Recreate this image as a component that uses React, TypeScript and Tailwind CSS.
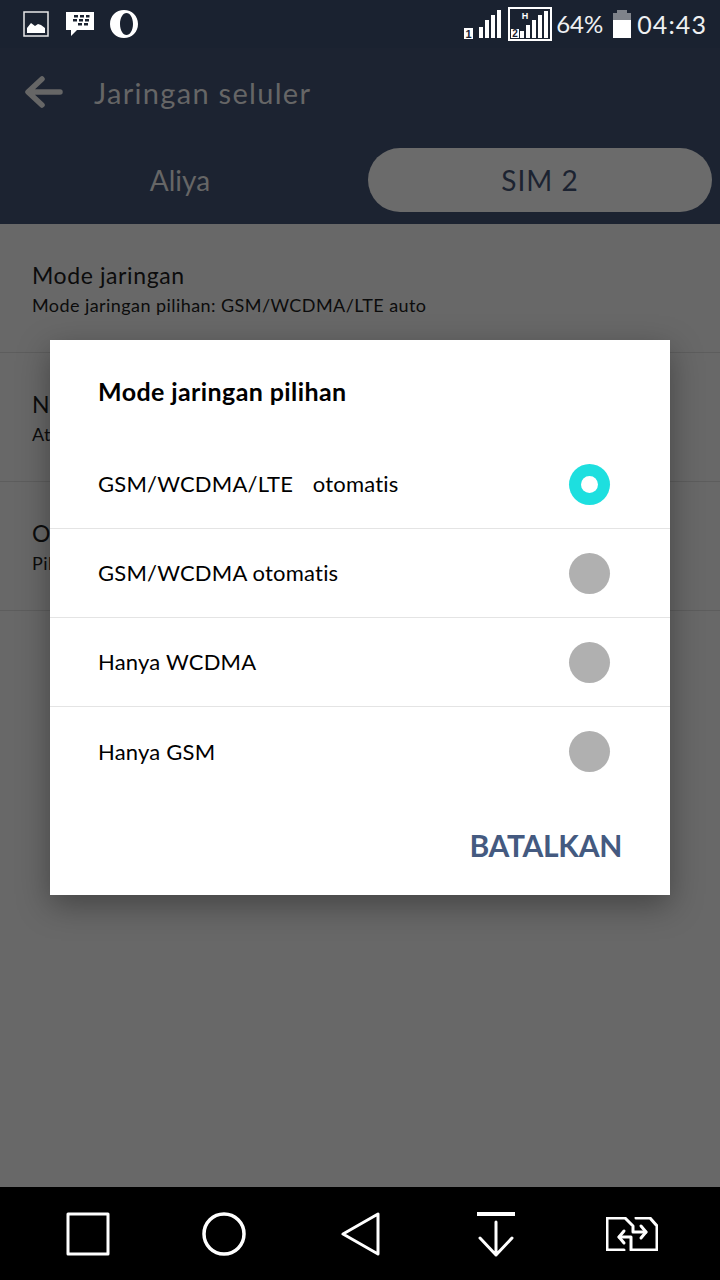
const font = "font-['Lato','Noto_Sans',sans-serif]";

const backgroundRows = [
  { title: 'Mode jaringan', sub: 'Mode jaringan pilihan: GSM/WCDMA/LTE auto' },
  { title: 'Nama titik akses', sub: 'Atur nama titik akses' },
  { title: 'Operator jaringan', sub: 'Pilih operator jaringan' },
];

const options = [
  { label: 'GSM/WCDMA/LTE  otomatis', selected: true },
  { label: 'GSM/WCDMA otomatis', selected: false },
  { label: 'Hanya WCDMA', selected: false },
  { label: 'Hanya GSM', selected: false },
];

function SimOneSignal() {
  return (
    <svg width="38" height="29" viewBox="0 0 38 29" fill="#fff">
      <rect x="0" y="18" width="9" height="11" />
      <text x="4.500" y="27.500" textAnchor="middle" fontSize="11" fontWeight="700" fill="#1a2230" fontFamily="Liberation Sans">1</text>
      <rect x="15" y="17" width="4" height="11" />
      <rect x="21" y="10" width="4" height="18" />
      <rect x="27" y="5" width="4" height="23" />
      <rect x="33" y="0" width="4" height="28" />
    </svg>
  );
}

function SimTwoSignal() {
  return (
    <svg width="44" height="34" viewBox="0 0 44 34" fill="#fff">
      <rect x="1" y="1" width="42" height="32" fill="none" stroke="#fff" strokeWidth="2" />
      <text x="17" y="12" textAnchor="middle" fontSize="9" fontWeight="700" fontFamily="Liberation Sans">H</text>
      <rect x="3" y="22" width="8" height="9" />
      <text x="7" y="30" textAnchor="middle" fontSize="10" fontWeight="700" fill="#1a2230" fontFamily="Liberation Sans">2</text>
      <rect x="12" y="24" width="4" height="7" />
      <rect x="18" y="18" width="4" height="13" />
      <rect x="24" y="13" width="4" height="18" />
      <rect x="30" y="8" width="4" height="23" />
      <rect x="36" y="4" width="4" height="27" />
    </svg>
  );
}

function StatusBar() {
  return (
    <div className="flex h-12 items-center justify-between bg-[#1a2230] pl-[23px] pr-[13px]">
      <div className="flex items-center gap-[17px]">
        <svg width="26" height="26" viewBox="0 0 26 26">
          <rect x="1" y="1" width="24" height="24" fill="none" stroke="#e8e8e8" strokeWidth="1.500" />
          <path d="M4 22v-5l4-5 4 3 3-2 3 1 4 3v5z" fill="#fff" />
        </svg>
        <svg width="28" height="26" viewBox="0 0 28 26">
          <path d="M0 1h28v18H11l-6 6v-6H0z" fill="#fff" />
          <g fill="#1a2230">
            <rect x="8" y="4" width="4" height="2.500" />
            <rect x="14" y="4" width="4" height="2.500" />
            <rect x="20" y="4" width="3.500" height="2.500" />
            <rect x="7" y="8" width="4" height="2.500" />
            <rect x="13" y="8" width="4" height="2.500" />
            <rect x="19" y="8" width="4" height="2.500" />
            <rect x="12" y="12" width="4" height="2.500" />
            <rect x="18" y="12" width="4" height="2.500" />
          </g>
        </svg>
        <svg className="ml-[-1px]" width="28" height="28" viewBox="0 0 28 28">
          <path
            fillRule="evenodd"
            d="M14 0c8 0 14 6 14 14s-6 14-14 14S0 22 0 14 6 0 14 0zm2.500 3c-3.600 0-6.500 4.900-6.500 11s2.900 11 6.500 11 6.500-4.900 6.500-11-2.900-11-6.500-11z"
            fill="#fff"
          />
        </svg>
      </div>
      <div className="flex items-center">
        <SimOneSignal />
        <div className="ml-[6px]">
          <SimTwoSignal />
        </div>
        <span className={`${font} ml-[4px] text-[24px] leading-none text-[#eef0f2]`}>64%</span>
        <svg className="ml-[10px]" width="18" height="28" viewBox="0 0 18 28">
          <path d="M4 0h10v3h4v7H0V3h4z" fill="#7f838a" />
          <rect x="0" y="10" width="18" height="18" fill="#fff" />
        </svg>
        <span className={`${font} ml-[6px] text-[25px] leading-none tracking-[1.1px] text-[#eef0f2]`}>04:43</span>
      </div>
    </div>
  );
}

function Header() {
  return (
    <div className="bg-[#1c2331]">
      <div className="flex h-[88px] items-center pl-[25px]">
        <svg width="38" height="32" viewBox="0 0 38 32" fill="none" stroke="#666" strokeWidth="5.500" strokeLinecap="round" strokeLinejoin="round">
          <path d="M35 16H4M17 3 3 16l14 13" />
        </svg>
        <span className={`${font} ml-[31px] text-[29px] leading-none tracking-[1.3px] text-[#666666]`}>Jaringan seluler</span>
      </div>
      <div className="flex h-[88px] items-start gap-2 pr-2 pt-3">
        <div className={`${font} flex h-16 w-[360px] items-center justify-center text-[28px] text-[#666666]`}>Aliya</div>
        <div className={`${font} flex h-16 w-[344px] items-center justify-center rounded-full bg-[#6b6b6b] text-[28px] tracking-[1px] text-[#1c2331]`}>
          SIM 2
        </div>
      </div>
    </div>
  );
}

function Dialog() {
  return (
    <div className={`${font} absolute left-[50px] top-[340px] h-[555px] w-[620px] bg-white text-black shadow-[0_10px_30px_rgba(0,0,0,0.35)]`}>
      <div className="h-[100px] pl-12 pt-[35px]">
        <span className="block text-[25px] font-bold leading-[32px] tracking-[0.4px]">Mode jaringan pilihan</span>
      </div>
      <div>
        {options.map((o, i) => (
          <div
            key={o.label}
            className={`flex h-[89px] items-center justify-between pl-12 pr-[60px] ${i < 3 ? 'border-b border-[#e4e4e4]' : ''}`}
          >
            <span className={`whitespace-pre text-[22px] leading-none tracking-[0.2px] ${o.selected ? '[word-spacing:4px]' : ''}`}>{o.label}</span>
            {o.selected ? (
              <div className="flex size-[41px] items-center justify-center rounded-full bg-[#1ddfdf]">
                <div className="size-[17px] rounded-full bg-white" />
              </div>
            ) : (
              <div className="size-[41px] rounded-full bg-[#b0b0b0]" />
            )}
          </div>
        ))}
      </div>
      <div className="flex justify-end pr-12 pt-[34px]">
        <span className="text-[30px] font-bold leading-none tracking-[-0.3px] text-[#445a80]">BATALKAN</span>
      </div>
    </div>
  );
}

function NavBar() {
  return (
    <div className="flex h-[93px] items-center bg-black pl-[66px]">
      <svg width="44" height="44" viewBox="0 0 44 44" fill="none" stroke="#fff" strokeWidth="3" strokeLinejoin="round">
        <rect x="2" y="2" width="40" height="40" />
      </svg>
      <svg className="ml-[92px]" width="44" height="44" viewBox="0 0 44 44" fill="none" stroke="#fff" strokeWidth="3.500">
        <circle cx="22" cy="22" r="20" />
      </svg>
      <svg className="ml-[95px]" width="40" height="46" viewBox="0 0 40 46" fill="none" stroke="#fff" strokeWidth="3" strokeLinejoin="round">
        <path d="M37 3v40L2 23z" />
      </svg>
      <svg className="ml-[95px]" width="40" height="46" viewBox="0 0 40 46" fill="none" stroke="#fff" strokeWidth="3" strokeLinecap="round" strokeLinejoin="round">
        <path d="M1 3h38" strokeWidth="4" strokeLinecap="butt" />
        <path d="M20 11v33M4 27l16 17 16-17" />
      </svg>
      <svg className="ml-[90px]" width="52" height="34" viewBox="0 0 52 34" fill="none" stroke="#fff" strokeWidth="3" strokeLinecap="round" strokeLinejoin="round">
        <path d="M18 33H1V1h18l8 8v6h13M30 1h14l7 8v24H25V20H13" />
        <path d="M35 9l5 6-5 6M18 14l-5 6 5 6" />
      </svg>
    </div>
  );
}

export default function App() {
  return (
    <div className="relative flex h-[1280px] w-[720px] flex-col overflow-hidden bg-[#686868]">
      <StatusBar />
      <Header />
      <div className={`${font} flex-1 text-[#0c0c0c]`}>
        {backgroundRows.map((r) => (
          <div key={r.title} className="flex h-[129px] flex-col border-b border-[#5d5d5d] pl-8 pt-9">
            <span className="text-[23px] leading-[30px] tracking-[0.6px]">{r.title}</span>
            <span className="mt-[3px] text-[18px] leading-[24px] tracking-[0.43px]">{r.sub}</span>
          </div>
        ))}
      </div>
      <NavBar />
      <Dialog />
    </div>
  );
}
